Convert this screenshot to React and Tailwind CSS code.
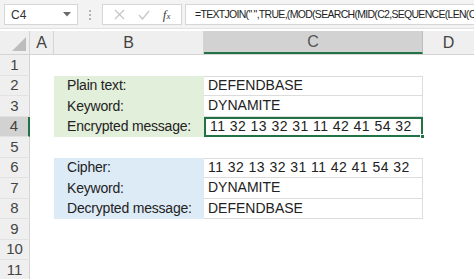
import React from 'react';

const font = { fontFamily: '"Liberation Sans", Arial, sans-serif' };

const rows = [
    { n: 1 },
    { n: 2, label: 'Plain text:', value: 'DEFENDBASE', tint: 'green' },
    { n: 3, label: 'Keyword:', value: 'DYNAMITE', tint: 'green' },
    { n: 4, label: 'Encrypted message:', value: '11 32 13 32 31 11 42 41 54 32', tint: 'green', active: true },
    { n: 5 },
    { n: 6, label: 'Cipher:', value: '11 32 13 32 31 11 42 41 54 32', tint: 'blue' },
    { n: 7, label: 'Keyword:', value: 'DYNAMITE', tint: 'blue' },
    { n: 8, label: 'Decrypted message:', value: 'DEFENDBASE', tint: 'blue' },
    { n: 9 },
    { n: 10 },
    { n: 11 },
];

const FormulaBar = () => (
    <div className="h-[29px] bg-[#f3f3f3] flex items-start pt-[4px] pl-[4px] border-b border-[#e1e1e1]">
        {/* Name box */}
        <div className="w-[74px] h-[21px] bg-white border border-[#d6d6d6] flex items-center justify-between px-[6px]">
            <span className="text-[12px] text-[#333]">C4</span>
            <svg width="8" height="5" viewBox="0 0 8 5"><polygon points="0,0 8,0 4,4.5" fill="#6b6b6b" /></svg>
        </div>
        {/* Grip */}
        <div className="w-[24px] h-[21px] flex flex-col items-center justify-center gap-[2px]">
            <span className="w-[2px] h-[2px] bg-[#b5b5b5]" />
            <span className="w-[2px] h-[2px] bg-[#b5b5b5]" />
            <span className="w-[2px] h-[2px] bg-[#b5b5b5]" />
        </div>
        {/* Cancel / enter / fx */}
        <div className="w-[80px] h-[21px] bg-white border border-[#d6d6d6] flex items-center justify-around px-[4px]">
            <svg width="11" height="11" viewBox="0 0 11 11"><path d="M1 1 L10 10 M10 1 L1 10" stroke="#c4c4c4" strokeWidth="1.2" /></svg>
            <svg width="12" height="10" viewBox="0 0 12 10"><path d="M1 5 L4.5 9 L11 1" stroke="#c4c4c4" strokeWidth="1.2" fill="none" /></svg>
            <span className="text-[13px] italic text-[#444]" style={{ fontFamily: '"Liberation Serif", serif' }}>f<span className="text-[9px]">x</span></span>
        </div>
        {/* Formula */}
        <div className="flex-1 h-[21px] ml-[3px] bg-white border border-r-0 border-[#d6d6d6] flex items-center pl-[9px] overflow-hidden">
            <span className="text-[10.5px] tracking-[-0.7px] text-[#222] whitespace-nowrap">=TEXTJOIN(" ",TRUE,(MOD(SEARCH(MID(C2,SEQUENCE(LEN(C2</span>
        </div>
    </div>
);

const HeaderRow = () => (
    <div className="h-[24px] mt-[2px] flex bg-[#efefef] border-b border-[#d4d4d4] text-[16px] text-[#444]">
        <div className="w-[30px] flex items-end justify-end pr-[3px] pb-[3px] border-r border-[#d4d4d4]">
            <svg width="14" height="14" viewBox="0 0 14 14"><polygon points="14,0 14,14 0,14" fill="#bdbdbd" /></svg>
        </div>
        <div className="w-[24px] flex items-center justify-center border-r border-[#d4d4d4]">A</div>
        <div className="w-[150px] flex items-center justify-center border-r border-[#d4d4d4]">B</div>
        <div className="w-[219px] flex items-center justify-center bg-[#d2d2d2] border-b-2 border-[#217346] border-r border-r-[#bdbdbd] text-[#555]">C</div>
        <div className="flex-1 flex items-center justify-center">D</div>
    </div>
);

const Row = ({ r }) => {
    const fill = r.tint === 'green' ? 'bg-[#e2efda]' : r.tint === 'blue' ? 'bg-[#ddebf7]' : '';
    const numeric = r.value && /^[\d ]+$/.test(r.value);
    return (
        <div className="h-[20.5px] flex text-[14px] text-[#222]">
            <div className={`w-[30px] flex items-center justify-center text-[15px] text-[#444] border-b border-[#e2e2e2] ${r.active ? 'bg-[#d2d2d2] border-r-2 border-r-[#217346]' : 'bg-[#efefef] border-r border-r-[#d4d4d4]'}`}>
                {r.n}
            </div>
            <div className="w-[24px]" />
            <div className={`w-[150px] flex items-center pl-[13px] tracking-[-0.2px] ${fill}`}>{r.label}</div>
            {r.label ? (
                <div className={`relative w-[219px] flex items-center pl-[4px] bg-white ${numeric ? 'tracking-[0.45px]' : ''} ${r.active ? 'border-2 border-[#217346]' : 'border-b border-r border-[#dcdcdc]'} ${r.n === 2 || r.n === 6 ? 'border-t' : ''}`}>
                    {r.value}
                    {r.active && <span className="absolute right-[-4px] bottom-[-4px] w-[5px] h-[5px] bg-[#217346] border border-white" />}
                </div>
            ) : (
                <div className="w-[219px]" />
            )}
            <div className="flex-1" />
        </div>
    );
};

export default function App() {
    return (
        <div className="w-[474px] h-[279px] overflow-hidden bg-white" style={font}>
            <FormulaBar />
            <HeaderRow />
            {rows.map(r => <Row key={r.n} r={r} />)}
        </div>
    );
}
